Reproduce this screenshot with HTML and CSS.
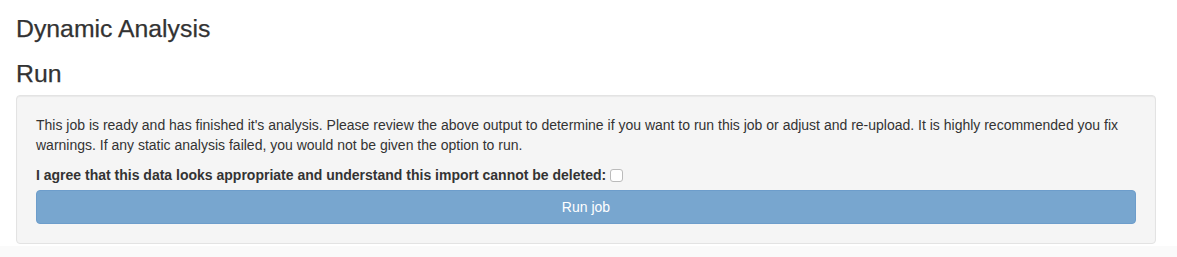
FILE: index.html
```html
<!DOCTYPE html>
<html lang="en">
<head>
  <meta charset="UTF-8" />
  <title>Dynamic Analysis</title>
  <link rel="stylesheet" href="styles.css">
</head>
<body>

  <div class="page">
    <h3 class="page-title">Dynamic Analysis</h3>
    <h3 class="section-title">Run</h3>

    <div class="well">
      <p>This job is ready and has finished it's analysis. Please review the above output to determine if you want to run this job or adjust and re-upload. It is highly recommended you fix warnings. If any static analysis failed, you would not be given the option to run.</p>
      <div class="form-group">
        <label for="agree">I agree that this data looks appropriate and understand this import cannot be deleted:</label>
        <input type="checkbox" id="agree">
      </div>
      <button type="button" class="btn" disabled>Run job</button>
    </div>
  </div>

  <div class="footer"></div>

</body>
</html>
```

FILE: styles.css
```css
body {
  margin: 0;
  padding: 0;
  font-family: 'Liberation Sans', Arial, sans-serif;
  font-size: 14px;
  line-height: 20px;
  color: #333;
  background: #fff;
}

.page {
  padding: 0 21px 0 16px;
}

h3 {
  font-size: 24.8px;
  font-weight: 500;
  line-height: 26.4px;
  margin: 20px 0 10px;
  -webkit-text-stroke: 0.25px #333;
}

.page-title {
  margin-top: 16px;
  margin-bottom: 0;
}

.section-title {
  margin-top: 19px;
  margin-bottom: 7px;
}

.well {
  background-color: #f5f5f5;
  border: 1px solid #e3e3e3;
  border-radius: 4px;
  padding: 19px;
  box-shadow: inset 0 1px 1px rgba(0,0,0,0.05);
}

.well p {
  margin: 0 0 10px;
}

.form-group {
  display: flex;
  align-items: center;
  margin-bottom: 5px;
}

.form-group label {
  font-weight: 700;
}

.form-group input {
  width: 13px;
  height: 13px;
  margin: 1px 0 0 4px;
  appearance: none;
  background: #fff;
  border: 1px solid #bbb;
  border-radius: 3px;
}

.btn {
  display: block;
  width: 100%;
  height: 34px;
  padding: 6px 12px;
  font-family: inherit;
  font-size: 14px;
  line-height: 20px;
  color: #fff;
  background-color: #78a6cf;
  border: 1px solid #6d9dcb;
  border-radius: 4px;
}

.footer {
  margin-top: 2px;
  height: 20px;
  background: #fafafa;
}
```
